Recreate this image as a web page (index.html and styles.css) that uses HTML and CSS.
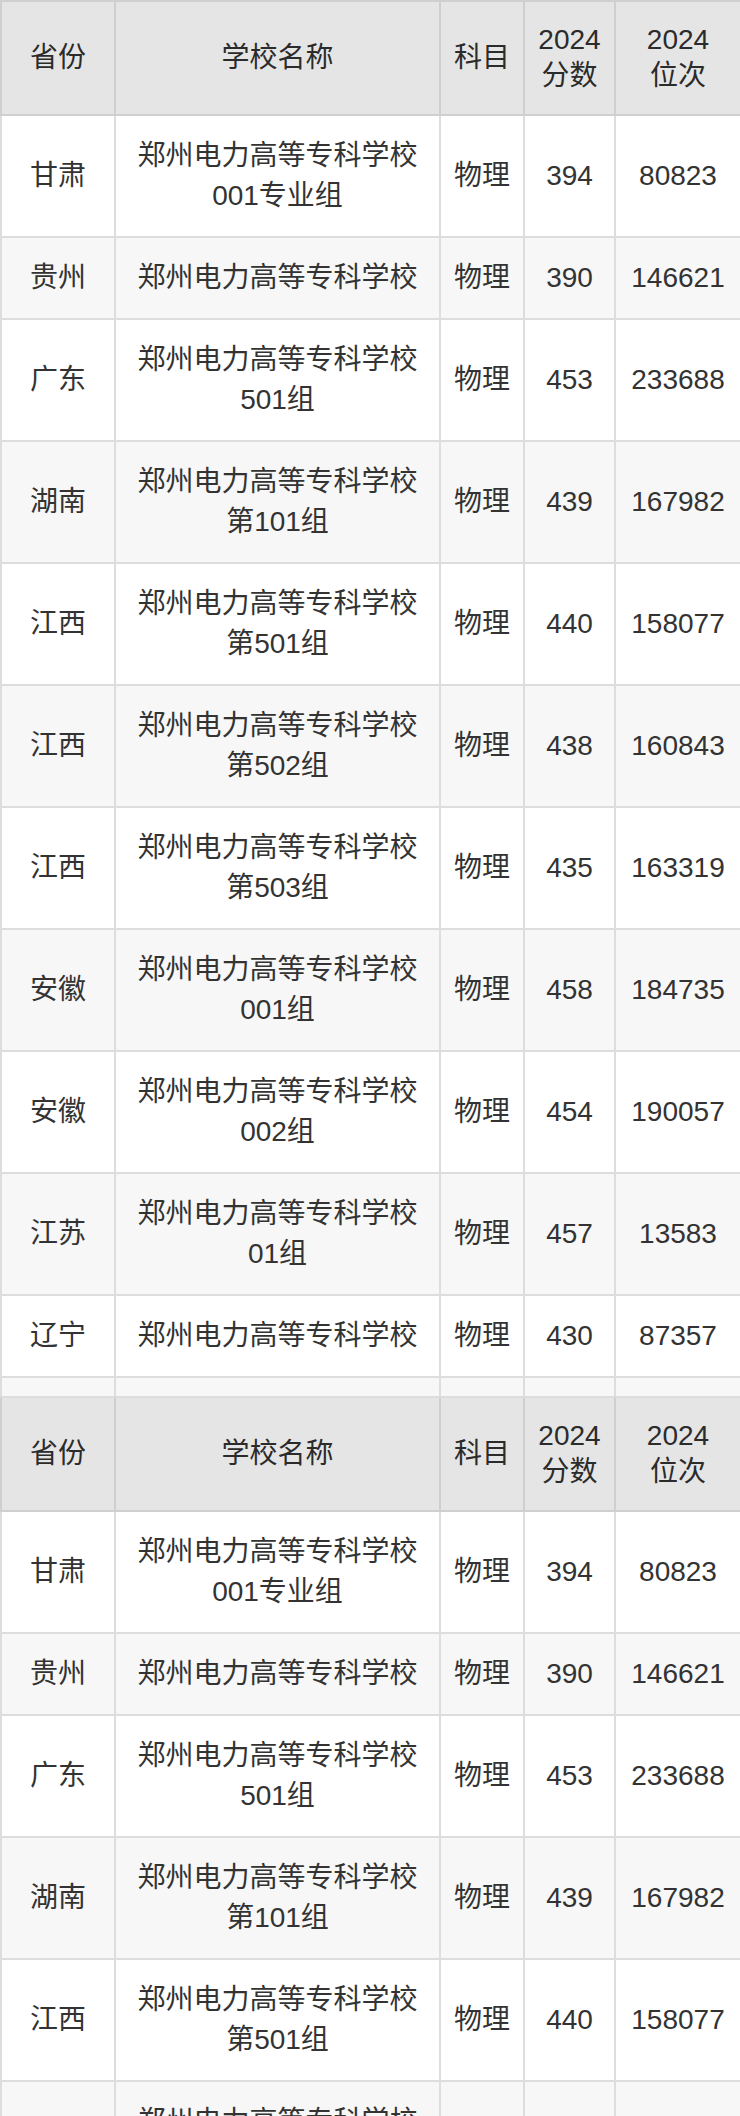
FILE: index.html
```html
<!DOCTYPE html>
<html lang="zh-CN">
<head>
<meta charset="utf-8">
<title>郑州电力高等专科学校 录取分数</title>
<link rel="stylesheet" href="styles.css">
</head>
<body>
<table class="score-table">
  <colgroup>
    <col class="c-prov"><col class="c-name"><col class="c-subj"><col class="c-score"><col class="c-rank">
  </colgroup>
  <thead>
    <tr class="head-row"><th>省份</th><th>学校名称</th><th>科目</th><th>2024<br>分数</th><th>2024<br>位次</th></tr>
  </thead>
  <tbody>
    <tr><td>甘肃</td><td>郑州电力高等专科学校001专业组</td><td>物理</td><td>394</td><td>80823</td></tr>
    <tr><td>贵州</td><td>郑州电力高等专科学校</td><td>物理</td><td>390</td><td>146621</td></tr>
    <tr><td>广东</td><td>郑州电力高等专科学校501组</td><td>物理</td><td>453</td><td>233688</td></tr>
    <tr><td>湖南</td><td>郑州电力高等专科学校第101组</td><td>物理</td><td>439</td><td>167982</td></tr>
    <tr><td>江西</td><td>郑州电力高等专科学校第501组</td><td>物理</td><td>440</td><td>158077</td></tr>
    <tr><td>江西</td><td>郑州电力高等专科学校第502组</td><td>物理</td><td>438</td><td>160843</td></tr>
    <tr><td>江西</td><td>郑州电力高等专科学校第503组</td><td>物理</td><td>435</td><td>163319</td></tr>
    <tr><td>安徽</td><td>郑州电力高等专科学校001组</td><td>物理</td><td>458</td><td>184735</td></tr>
    <tr><td>安徽</td><td>郑州电力高等专科学校002组</td><td>物理</td><td>454</td><td>190057</td></tr>
    <tr><td>江苏</td><td>郑州电力高等专科学校01组</td><td>物理</td><td>457</td><td>13583</td></tr>
    <tr><td>辽宁</td><td>郑州电力高等专科学校</td><td>物理</td><td>430</td><td>87357</td></tr>
    <tr class="spacer"><td></td><td></td><td></td><td></td><td></td></tr>
  </tbody>
  <tbody class="rehead">
    <tr class="head-row"><th>省份</th><th>学校名称</th><th>科目</th><th>2024<br>分数</th><th>2024<br>位次</th></tr>
  </tbody>
  <tbody>
    <tr><td>甘肃</td><td>郑州电力高等专科学校001专业组</td><td>物理</td><td>394</td><td>80823</td></tr>
    <tr><td>贵州</td><td>郑州电力高等专科学校</td><td>物理</td><td>390</td><td>146621</td></tr>
    <tr><td>广东</td><td>郑州电力高等专科学校501组</td><td>物理</td><td>453</td><td>233688</td></tr>
    <tr><td>湖南</td><td>郑州电力高等专科学校第101组</td><td>物理</td><td>439</td><td>167982</td></tr>
    <tr><td>江西</td><td>郑州电力高等专科学校第501组</td><td>物理</td><td>440</td><td>158077</td></tr>
    <tr><td>江西</td><td>郑州电力高等专科学校第502组</td><td>物理</td><td>438</td><td>160843</td></tr>
  </tbody>
</table>
</body>
</html>
```
FILE: styles.css
```css
html, body {
  margin: 0;
  padding: 0;
  background: #ffffff;
}

body {
  font-family: "Liberation Sans", "Noto Sans CJK SC", sans-serif;
  color: #333333;
}

.score-table {
  width: 740px;
  border-collapse: collapse;
  table-layout: fixed;
  font-size: 28px;
}

.c-prov { width: 114px; }
.c-name { width: 325px; }
.c-subj { width: 84px; }
.c-score { width: 91px; }
.c-rank { width: 126px; }

.score-table th,
.score-table td {
  border: 2px solid #dddddd;
  padding: 20px 12px;
  text-align: center;
  vertical-align: middle;
  line-height: 40px;
}

.score-table th {
  font-weight: normal;
  background: #e5e5e5;
  border-color: #cfcfcf;
  line-height: 36px;
  color: #2b2b2b;
}

.score-table tbody tr:nth-child(even) td {
  background: #f7f7f7;
}

.score-table .spacer td {
  padding: 0;
  height: 18px;
  line-height: 18px;
}
```
